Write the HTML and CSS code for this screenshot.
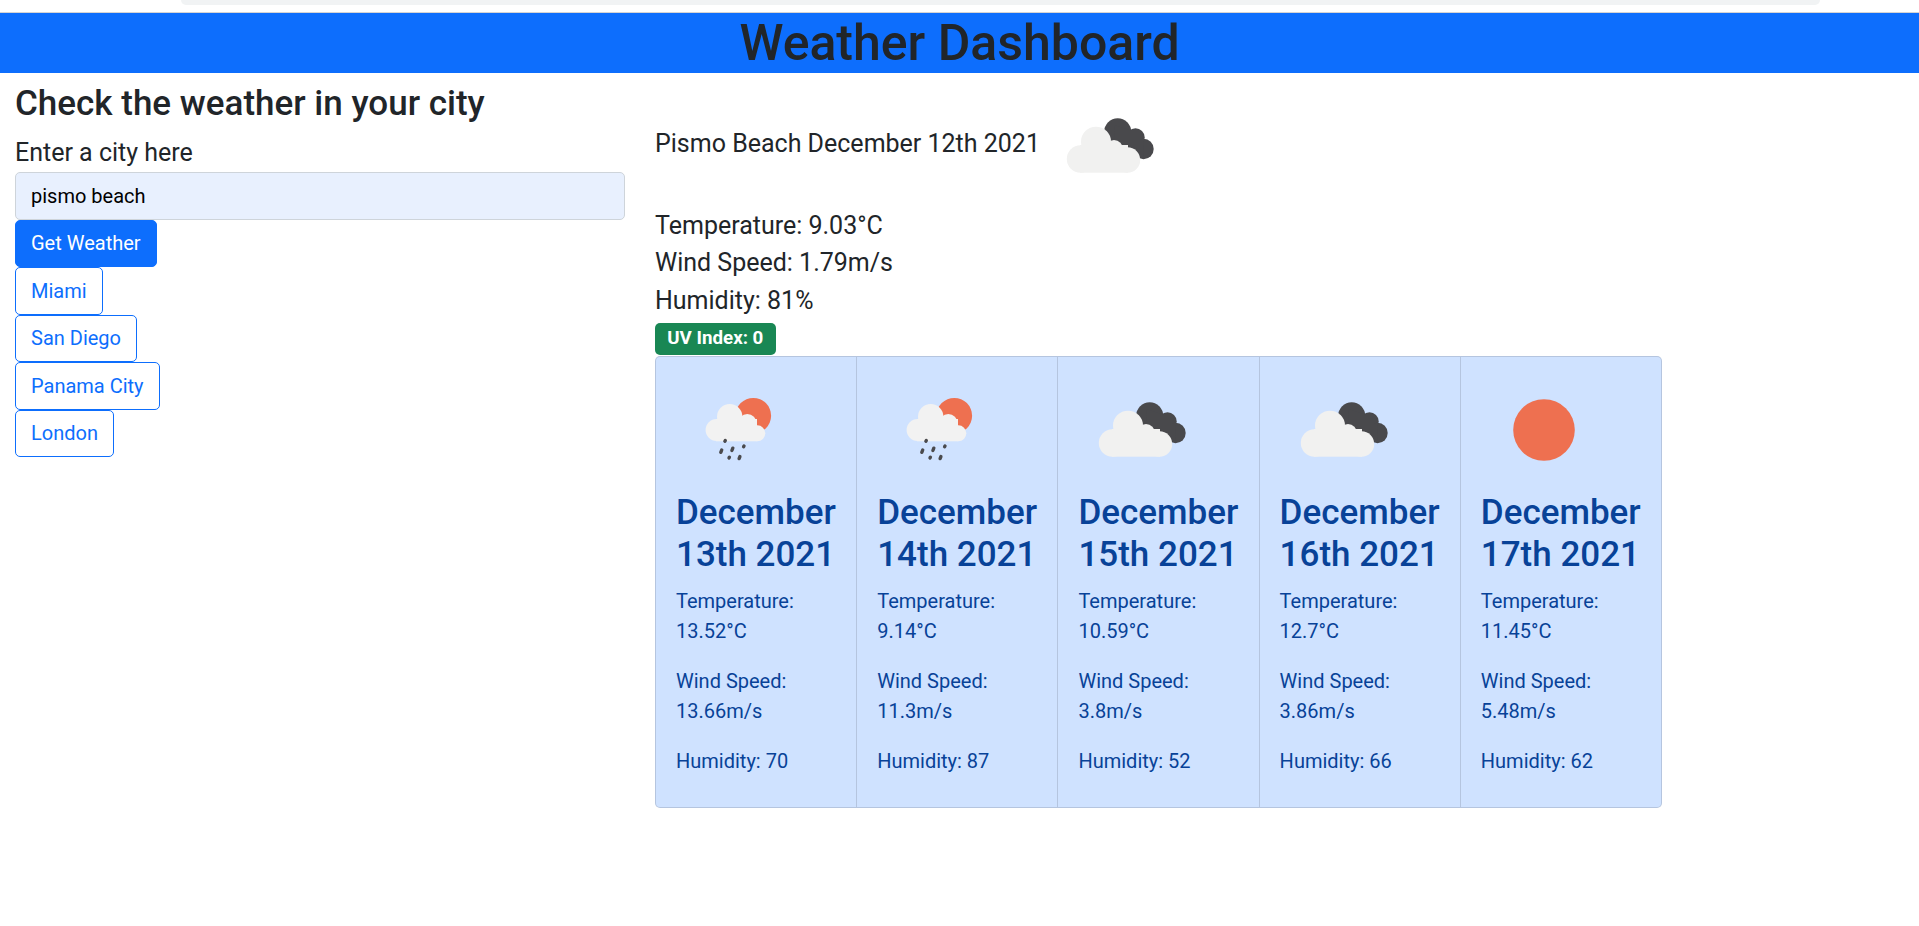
FILE: index.html
```html
<!DOCTYPE html>
<html lang="en">
<head>
    <meta charset="UTF-8">
    <meta name="viewport" content="width=device-width, initial-scale=1.0">
    <title>Weather Dashboard</title>
    <link rel="stylesheet" href="styles.css">
</head>
<body>
    <!-- Icon shapes, reused by the current weather and the forecast cards -->
    <svg class="icon-defs" width="0" height="0">
        <symbol id="icon-clouds" viewBox="0 0 125 125">
            <g fill="#49494c">
                <circle cx="71.7" cy="48.7" r="13.5"/>
                <circle cx="89.5" cy="54.5" r="9.2"/>
                <circle cx="97.5" cy="66" r="10.2"/>
                <path d="M68 42 L86 48 L97 58 L98 75 L70 75 Z"/>
            </g>
            <g fill="#f1f1f0">
                <circle cx="34.5" cy="76" r="13.7"/>
                <circle cx="50" cy="58.7" r="15"/>
                <circle cx="68" cy="66" r="9"/>
                <circle cx="81.5" cy="77" r="12.7"/>
                <rect x="34" y="62" width="48" height="27.7"/>
            </g>
        </symbol>
        <symbol id="icon-rain" viewBox="0 0 125 125">
            <circle cx="77.3" cy="48.7" r="17.8" fill="#ee7050"/>
            <g fill="#f2f2f2">
                <circle cx="40.6" cy="63" r="11"/>
                <circle cx="53.7" cy="49.7" r="12.7"/>
                <circle cx="71.3" cy="56.3" r="9.3"/>
                <circle cx="81.3" cy="66.3" r="8"/>
                <rect x="40" y="52" width="41" height="22.3"/>
            </g>
            <g stroke="#4a4a4d" stroke-width="3.4" stroke-linecap="round">
                <path d="M49.3 73.4 L48.9 74.2"/>
                <path d="M45.7 83 L44.8 85.3"/>
                <path d="M56.8 81.2 L55.9 83.5"/>
                <path d="M68 78.9 L67.6 79.7"/>
                <path d="M53.4 90.2 L53 90.9"/>
                <path d="M63.9 89.6 L63.1 91.6"/>
            </g>
        </symbol>
        <symbol id="icon-sun" viewBox="0 0 125 125">
            <circle cx="63" cy="63" r="30.8" fill="#ee7050"/>
        </symbol>
    </svg>

    <div class="browser-strip"></div>

    <header class="page-header">
        <h1>Weather Dashboard</h1>
    </header>

    <main class="layout">
        <!-- Search column -->
        <section class="search-col">
            <h3>Check the weather in your city</h3>
            <form class="search-form">
                <label for="city">Enter a city here</label>
                <input type="text" id="city" name="city" value="pismo beach">
                <button type="button" class="btn btn-primary">Get Weather</button>
                <button type="button" class="btn btn-outline">Miami</button>
                <button type="button" class="btn btn-outline">San Diego</button>
                <button type="button" class="btn btn-outline">Panama City</button>
                <button type="button" class="btn btn-outline">London</button>
            </form>
        </section>

        <!-- Current weather and forecast -->
        <section class="weather-col">
            <div class="current-title">
                <span class="current-name">Pismo Beach December 12th 2021</span>
                <svg class="weather-icon"><use href="#icon-clouds"/></svg>
            </div>
            <p class="current-line">Temperature: 9.03°C</p>
            <p class="current-line">Wind Speed: 1.79m/s</p>
            <p class="current-line">Humidity: 81%</p>
            <span class="badge">UV Index: 0</span>

            <div class="card-group">
                <article class="card">
                    <svg class="weather-icon"><use href="#icon-rain"/></svg>
                    <h3 class="card-title">December 13th 2021</h3>
                    <p>Temperature: 13.52°C</p>
                    <p>Wind Speed: 13.66m/s</p>
                    <p>Humidity: 70</p>
                </article>
                <article class="card">
                    <svg class="weather-icon"><use href="#icon-rain"/></svg>
                    <h3 class="card-title">December 14th 2021</h3>
                    <p>Temperature: 9.14°C</p>
                    <p>Wind Speed: 11.3m/s</p>
                    <p>Humidity: 87</p>
                </article>
                <article class="card">
                    <svg class="weather-icon"><use href="#icon-clouds"/></svg>
                    <h3 class="card-title">December 15th 2021</h3>
                    <p>Temperature: 10.59°C</p>
                    <p>Wind Speed: 3.8m/s</p>
                    <p>Humidity: 52</p>
                </article>
                <article class="card">
                    <svg class="weather-icon"><use href="#icon-clouds"/></svg>
                    <h3 class="card-title">December 16th 2021</h3>
                    <p>Temperature: 12.7°C</p>
                    <p>Wind Speed: 3.86m/s</p>
                    <p>Humidity: 66</p>
                </article>
                <article class="card">
                    <svg class="weather-icon"><use href="#icon-sun"/></svg>
                    <h3 class="card-title">December 17th 2021</h3>
                    <p>Temperature: 11.45°C</p>
                    <p>Wind Speed: 5.48m/s</p>
                    <p>Humidity: 62</p>
                </article>
            </div>
        </section>
    </main>
</body>
</html>
```

FILE: styles.css
```css
/* Global Styling */
body {
    font-family: Roboto, "Liberation Sans", sans-serif;
    font-size: 20px;
    line-height: 1.5;
    color: #212529;
    background-color: #fff;
    margin: 0;
}

h1,
h3,
p {
    margin: 0;
}

.icon-defs {
    display: block;
    height: 0;
}

/* Leftover of the browser bar above the page */
.browser-strip {
    width: 1639px;
    height: 5px;
    margin: 0 0 7px 181px;
    background-color: #f1f3f4;
    border-radius: 0 0 14px 14px;
}

/* Header */
.page-header {
    border-top: 1px solid #d4d4d4;
    background-color: #0d6efd;
    text-align: center;
}

.page-header h1 {
    font-size: 50px;
    font-weight: 500;
    line-height: 60px;
}

/* Page Columns */
.layout {
    display: grid;
    grid-template-columns: 640px 1fr;
}

.search-col {
    padding: 10px 15px 0;
}

.search-col h3 {
    font-size: 35px;
    font-weight: 500;
    line-height: 42px;
    margin-bottom: 9px;
}

/* Search Form */
.search-form {
    display: flex;
    flex-direction: column;
    align-items: flex-start;
}

.search-form label {
    font-size: 25px;
    line-height: 37.5px;
}

.search-form input {
    width: 100%;
    box-sizing: border-box;
    height: 48px;
    padding: 8px 15px;
    font-family: inherit;
    font-size: 20px;
    color: #000;
    background-color: #e8f0fe;
    border: 1px solid #ced4da;
    border-radius: 5px;
}

.btn {
    box-sizing: border-box;
    height: 47.5px;
    padding: 0 15px;
    font-family: inherit;
    font-size: 20px;
    border: 1px solid #0d6efd;
    border-radius: 5px;
}

.btn-primary {
    color: #fff;
    background-color: #0d6efd;
}

.btn-outline {
    color: #0d6efd;
    background-color: #fff;
}

/* Current Weather */
.weather-col {
    padding: 10px 15px 0;
}

.current-title {
    display: flex;
    align-items: center;
    gap: 6px;
    font-size: 25px;
    height: 123.5px;
}

.current-name {
    padding-bottom: 2px;
}

.current-title .weather-icon {
    margin-top: 2px;
}

.current-line {
    font-size: 25px;
    line-height: 37.5px;
}

.weather-icon {
    display: block;
    width: 125px;
    height: 125px;
}

.badge {
    display: inline-block;
    margin-top: 3.5px;
    padding: 6.5px 12.2px;
    font-size: 18.75px;
    font-weight: 700;
    line-height: 19px;
    color: #fff;
    background-color: #198754;
    border-radius: 5px;
    vertical-align: top;
}

/* Forecast Cards */
.card-group {
    display: flex;
    width: 1007px;
    height: 452px;
    margin-top: 1px;
    box-sizing: border-box;
    color: #084298;
    background-color: #cfe2ff;
    border: 1px solid rgba(0, 0, 0, 0.125);
    border-radius: 5px;
}

.card {
    flex: 1;
    padding: 10px 20px;
}

.card + .card {
    border-left: 1px solid rgba(0, 0, 0, 0.125);
}

.card-title {
    font-size: 35px;
    font-weight: 500;
    line-height: 42px;
    margin-bottom: 10px;
}

.card p {
    margin-bottom: 20px;
}
```
